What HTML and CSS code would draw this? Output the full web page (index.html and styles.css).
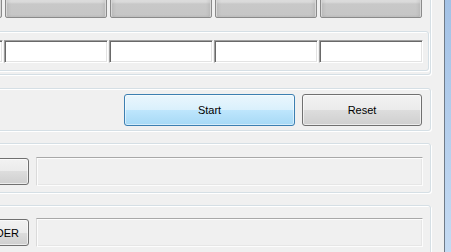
FILE: index.html
```html
<!DOCTYPE html>
<html lang="en">
<head>
  <meta charset="UTF-8" />
  <title>Runner</title>
  <link rel="stylesheet" href="styles.css">
</head>
<body>

  <div class="window">
    <div class="client">

      <!-- Column headers + value row -->
      <div class="group group-top">
        <div class="cells">
          <div class="cell"></div>
          <div class="cell"></div>
          <div class="cell"></div>
          <div class="cell"></div>
          <div class="cell"></div>
        </div>
        <div class="group inner">
          <div class="inputs">
            <input class="input" type="text">
            <input class="input" type="text">
            <input class="input" type="text">
            <input class="input" type="text">
            <input class="input" type="text">
          </div>
        </div>
      </div>

      <!-- Actions -->
      <div class="group group-actions">
        <div class="actions">
          <button class="btn btn-start">Start</button>
          <button class="btn btn-reset">Reset</button>
        </div>
      </div>

      <!-- Paths -->
      <div class="group group-path">
        <div class="path-row">
          <button class="btn btn-path">FILE</button>
          <div class="field"></div>
        </div>
      </div>

      <div class="group group-path last">
        <div class="path-row">
          <button class="btn btn-path">OPEN FOLDER</button>
          <div class="field"></div>
        </div>
      </div>

    </div>
    <div class="frame"></div>
  </div>

</body>
</html>
```

FILE: styles.css
```css
* {
  box-sizing: border-box;
}

html, body {
  margin: 0;
}

body {
  width: 451px;
  height: 252px;
  overflow: hidden;
  background: #f0f0f0;
  font-family: "Liberation Sans", Arial, sans-serif;
  font-size: 11px;
  color: #000;
}

.window {
  display: flex;
  height: 252px;
}

.client {
  width: 444px;
  flex-shrink: 0;
}

.frame {
  flex: 1;
  border-left: 1px solid #6f7b88;
  background: linear-gradient(#a3c2e6, #c5dbf3);
}

/* Group boxes */
.group {
  margin-left: -110px;
  width: 541px;
  border: 1px solid #d5dfe5;
  border-radius: 3px;
  box-shadow: 1px 1px 0 #fff, inset 1px 1px 0 #fff;
}

.group-top {
  margin-top: -20px;
  height: 95px;
}

.cells {
  display: flex;
  gap: 3px;
  margin: 14px 0 0 9px;
}

.cell {
  flex-shrink: 0;
  width: 102px;
  height: 23px;
  border: 1px solid #8a8a8a;
  border-radius: 2px;
  background: linear-gradient(#dedede 0, #dadada 6px, #c8c8c8 8px, #c6c6c6 100%);
  box-shadow: inset 1px 0 0 #d8d8d8, inset -1px 0 0 #d8d8d8, inset 3px 0 3px rgba(0,0,0,0.06), inset -3px 0 3px rgba(0,0,0,0.06);
}

.group.inner {
  margin: 13px 0 0 4px;
  width: 534px;
  height: 40px;
  padding: 8px 0 0 3px;
}

.inputs {
  display: flex;
  gap: 1px;
}

.input {
  flex-shrink: 0;
  width: 104px;
  height: 23px;
  margin: 0;
  padding: 0 3px;
  background: #fff;
  border-top: 1px solid #a0a0a0;
  border-left: 1px solid #a0a0a0;
  border-right: 1px solid #fff;
  border-bottom: 1px solid #fff;
  box-shadow: inset 1px 1px 0 #696969, inset -1px -1px 0 #e3e3e3;
  font: inherit;
  outline: none;
}

/* Buttons */
.btn {
  margin: 0;
  padding: 0;
  border: 1px solid #707070;
  border-radius: 3px;
  background: linear-gradient(#f2f2f2 0%, #ebebeb 50%, #dddddd 50%, #cfcfcf 100%);
  box-shadow: inset 0 0 0 1px rgba(255,255,255,0.6);
  font: inherit;
  color: #000;
  white-space: nowrap;
  cursor: pointer;
}

.group-actions {
  margin-top: 13px;
  height: 43px;
}

.actions {
  display: flex;
  justify-content: flex-end;
  gap: 7px;
  padding: 5px 8px 0 0;
}

.btn-start {
  width: 171px;
  height: 32px;
  border-color: #3c7fb1;
  background: linear-gradient(#eaf6fd 0%, #d9f0fc 50%, #bee6fd 50%, #a7d9f5 100%);
  box-shadow: inset 0 0 0 1px rgba(255,255,255,0.5);
}

.btn-reset {
  width: 120px;
  height: 32px;
}

/* Path rows */
.group-path {
  margin-top: 12px;
  height: 50px;
}

.group-path.last {
  height: 60px;
}

.path-row {
  display: flex;
  align-items: center;
  gap: 7px;
  padding: 13px 0 0 39px;
}

.group-path.last .path-row {
  padding-top: 12px;
}

.btn-path {
  flex-shrink: 0;
  width: 99px;
  height: 27px;
}

.field {
  flex-shrink: 0;
  width: 387px;
  height: 29px;
  background: #f0f0f0;
  border-top: 1px solid #a8a8a8;
  border-left: 1px solid #dadada;
  border-right: 1px solid #fcfcfc;
  border-bottom: 1px solid #fcfcfc;
  box-shadow: inset 1px 1px 0 #fcfcfc, inset -1px -1px 0 #e6e6e6;
}
```
